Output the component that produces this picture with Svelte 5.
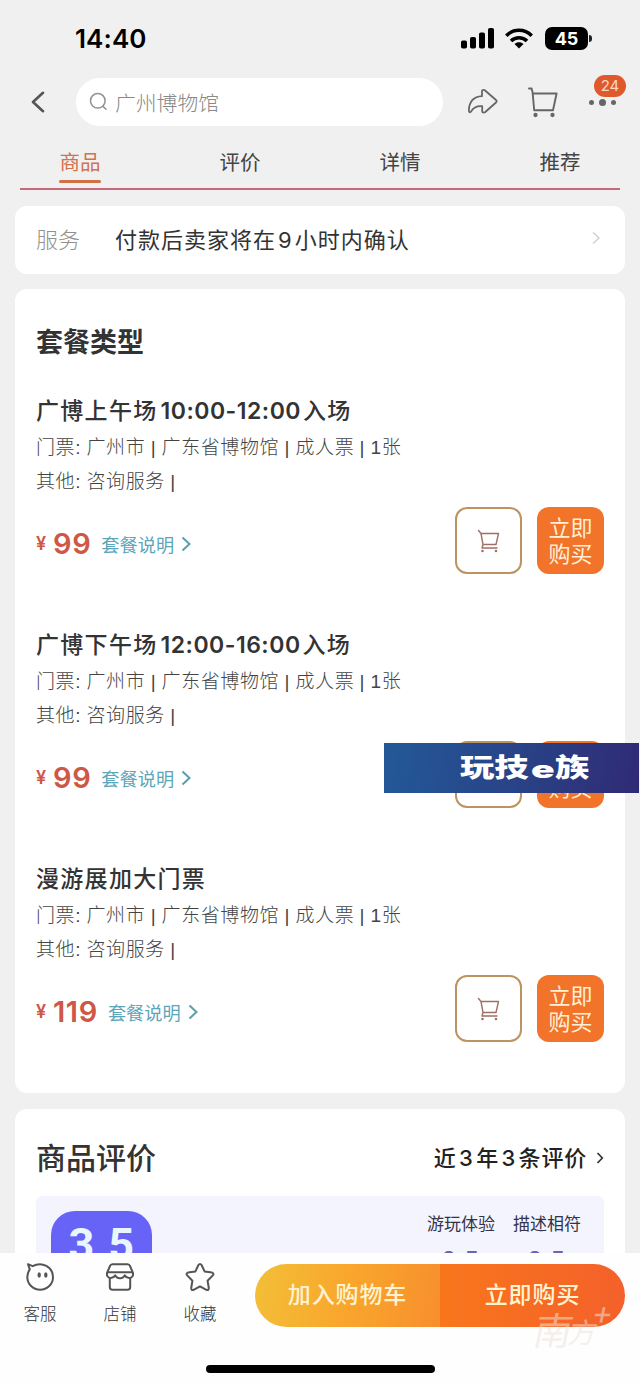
<script lang="ts">
	let tabs = ['商品', '评价', '详情', '推荐'];
	let active = $state('商品');

	let packages: { name: string[], price: number }[] = [
		{ name: ['广博上午场', '10:00-12:00', '入场'], price: 99 },
		{ name: ['广博下午场', '12:00-16:00', '入场'], price: 99 },
		{ name: ['漫游展加大门票'], price: 119 }
	];

	let scores = [
		{ label: '游玩体验', value: '3.5' },
		{ label: '描述相符', value: '3.5' }
	];
</script>

{#snippet cart(size: number, width: number)}
	<svg width={size} height={size} viewBox="0 0 32 32" fill="none" stroke="currentColor" stroke-width={width} stroke-linecap="round" stroke-linejoin="round">
		<path d="M2 2.5H4.6L5.6 6.5L7.2 24.2H26L29.6 7.5H5.8" />
		<circle cx="8.5" cy="29" r="1.2" fill="currentColor" />
		<circle cx="25.5" cy="29" r="1.2" fill="currentColor" />
	</svg>
{/snippet}

{#snippet smallCart()}
	<svg width="24" height="24" viewBox="0 0 24 24" fill="none" stroke="currentColor" stroke-width="1.4" stroke-linecap="round" stroke-linejoin="round">
		<path d="M1.5 1.5L4 4.500H21.5L19 15.5H6L4 4.5M6 15.5L5 19H20" />
		<circle cx="5.5" cy="22" r="0.6" fill="currentColor" />
		<circle cx="19" cy="22" r="0.6" fill="currentColor" />
	</svg>
{/snippet}

<div class="phone">
	<div class="screen">
		<div class="status">
			<span class="time">14:40</span>
			<svg class="signal" width="33" height="21" viewBox="0 0 33 21">
				<rect x="0" y="12.5" width="6" height="8" rx="1.8" />
				<rect x="9" y="9" width="6" height="11.5" rx="1.8" />
				<rect x="18" y="4.5" width="6" height="16" rx="1.8" />
				<rect x="27" y="0" width="6" height="20.5" rx="1.8" />
			</svg>
			<svg class="wifi" width="28" height="21" viewBox="0 0 28 21" fill="none" stroke="#000" stroke-width="3.6">
				<path d="M1.3 7.7C8.5 .5 19.5 .5 26.7 7.7" />
				<path d="M6 13C10.5 8.7 17.5 8.7 22 13" />
				<path d="M14 20.5L9.5 16C12 13.8 16 13.8 18.5 16Z" fill="#000" stroke="none" />
			</svg>
			<span class="battery">45</span>
			<span class="cap"></span>
		</div>

		<div class="top">
			<svg class="back" width="14" height="22" viewBox="0 0 14 22" fill="none" stroke="#555" stroke-width="2.6" stroke-linecap="round" stroke-linejoin="round">
				<path d="M12 1.8L2 11L12 20.2" />
			</svg>
			<div class="search">
				<svg width="20" height="20" viewBox="0 0 20 20" fill="none" stroke="#929292" stroke-width="1.5" stroke-linecap="round">
					<circle cx="8.8" cy="8.8" r="7.3" />
					<path d="M14 14.4L17 17.2" />
				</svg>
				<span>广州博物馆</span>
			</div>
			<svg class="share" width="32" height="28" viewBox="0 0 32 28" fill="none" stroke="#666" stroke-width="1.8" stroke-linejoin="round">
				<path d="M15.3 2.2Q16.5 1.4 17.8 2.3L29 12Q30.3 13.3 29 14.5L18 24.2Q15.6 25.4 15.2 23V18.2C9.5 17.7 6.5 19.3 4 23.6Q1.8 25.5 1.9 22C2.3 13.5 7 8.7 15 8.2V3.2Z" />
			</svg>
			<span class="cart">{@render cart(32, 1.9)}</span>
			<span class="more"><i></i><i></i><i></i><b>24</b></span>
		</div>

		<div class="tabs">
			{#each tabs as t}
				<button class:active={t === active} onclick={() => (active = t)}>{t}</button>
			{/each}
		</div>

		<div class="card service">
			<span class="label">服务</span>
			<span class="value">付款后卖家将在<em>9</em>小时内确认</span>
			<svg width="10" height="14" viewBox="0 0 10 14" fill="none" stroke="#d0d0d0" stroke-width="1.4">
				<path d="M2 1.5L8 7L2 12.5" />
			</svg>
		</div>

		<div class="card packages">
			<h2>套餐类型</h2>
			{#each packages as p}
				<div class="package">
					<h3>{#each p.name as part}<span class:hours={part.includes(':')}>{part}</span>{/each}</h3>
					<p>门票: 广州市 | 广东省博物馆 | 成人票 | 1张</p>
					<p>其他: 咨询服务 |</p>
					<div class="row">
						<span class="yen">¥</span>
						<span class="price">{p.price}</span>
						<span class="explain">套餐说明</span>
						<svg class="arrow" width="11" height="16" viewBox="0 0 11 16" fill="none" stroke="#5b9eae" stroke-width="2">
							<path d="M1.5 1.5L8.5 8L1.5 14.5" />
						</svg>
						<span class="add">{@render smallCart()}</span>
						<span class="buy">立即<br />购买</span>
					</div>
				</div>
			{/each}
		</div>

		<div class="card reviews">
			<div class="head">
				<h2>商品评价</h2>
				<span class="count">近<em>3</em>年<em>3</em>条评价</span>
				<svg width="8" height="12" viewBox="0 0 8 12" fill="none" stroke="#333" stroke-width="1.7">
					<path d="M1.5 1L6.3 6L1.5 11" />
				</svg>
			</div>
			<div class="panel">
				<span class="score">3.5</span>
				{#each scores as s}
					<div class="sub">
						<span>{s.label}</span>
						<b>{s.value}</b>
					</div>
				{/each}
			</div>
		</div>

		<div class="banner"><span>玩技</span><span class="small">e</span><span>族</span></div>
	</div>

	<div class="bottom">
		<div class="actions">
			<div class="action">
				<svg width="30" height="30" viewBox="0 0 30 30" fill="none" stroke="#555" stroke-width="2" stroke-linejoin="round">
					<path d="M3 2.2L7.6 4.2C17 -1 28 4.8 28 15.2C28 22 22.2 27.8 15.2 27.8C8 27.8 2.3 22 2.3 15C2.3 12 3.2 9.6 4.8 7.4Z" />
					<ellipse cx="14.2" cy="13" rx="1.7" ry="2.7" fill="#555" stroke="none" />
					<ellipse cx="20.8" cy="13" rx="1.7" ry="2.7" fill="#555" stroke="none" />
				</svg>
				<span>客服</span>
			</div>
			<div class="action">
				<svg width="30" height="30" viewBox="0 0 30 30" fill="none" stroke="#555" stroke-width="2" stroke-linejoin="round">
					<path d="M7.5 2.2H22.5Q24.5 2.2 25 4L28 11Q28.6 15.5 24.5 16Q21.5 16.2 19.7 13.4Q17.8 16.5 15 16.2Q12.2 16.5 10.3 13.4Q8.5 16.2 5.5 16Q1.4 15.5 2 11L5 4Q5.5 2.2 7.5 2.2Z" />
					<path d="M2.5 10.2H27.5M4.8 16V25Q4.8 27.8 7.5 27.8H22.5Q25.2 27.8 25.2 25V16" />
				</svg>
				<span>店铺</span>
			</div>
			<div class="action">
				<svg width="30" height="30" viewBox="0 0 30 30" fill="none" stroke="#555" stroke-width="2" stroke-linejoin="round">
					<path d="M13.4 3Q15 .8 16.6 3L19.7 9.6L27 10.6Q29.4 11.4 27.8 13.4L22.6 18.8L23.8 26Q23.8 28.8 21.4 27.8L15 24.4L8.6 27.8Q6.2 28.8 6.2 26L7.4 18.8L2.2 13.4Q.6 11.4 3 10.6L10.3 9.6Z" />
				</svg>
				<span>收藏</span>
			</div>
		</div>
		<div class="pay">
			<span class="to-cart">加入购物车</span>
			<span class="now">立即购买</span>
		</div>
		<div class="home"></div>
		<div class="mark"><span class="nan">南</span><span class="fang">方</span><span class="plus">+</span></div>
	</div>
</div>

<style>
	:global(body) {
		background: #f0f0f0;
	}

	.phone {
		width: 640px;
		height: 1385px;
		overflow: hidden;
		display: flex;
		flex-direction: column;
		font-family: Inter, "Noto Sans CJK SC", sans-serif;
		color: #333;
	}

	.phone span {
		white-space: nowrap;
	}

	svg {
		display: block;
		flex: none;
	}

	h2, h3, p {
		margin: 0;
		font-weight: 500;
	}

	em, i {
		font-style: normal;
	}

	.screen {
		position: relative;
		height: 1253px;
		flex: none;
		overflow: hidden;
		background: #f0f0f0;
	}

	.status {
		display: flex;
		align-items: center;
		height: 76px;
		box-sizing: border-box;
		padding: 0 48px 0 75px;
	}

	.time {
		flex: 1;
		color: #000;
		font-size: 26px;
		font-weight: 600;
		letter-spacing: 0.1px;
	}

	.wifi {
		margin: 0 12px 0 11px;
	}

	.battery {
		width: 43px;
		height: 23px;
		line-height: 23px;
		border-radius: 7px;
		background: #000;
		color: #fff;
		font-size: 18px;
		font-weight: 700;
		text-align: center;
	}

	.cap {
		width: 3px;
		height: 7px;
		margin-left: 1px;
		border-radius: 0 4px 4px 0;
		background: #222;
	}

	.top {
		display: flex;
		align-items: center;
		height: 52px;
		padding-left: 31px;
	}

	.search {
		display: flex;
		align-items: center;
		width: 367px;
		height: 48px;
		margin-left: 31px;
		box-sizing: border-box;
		padding-left: 13px;
		border-radius: 24px;
		background: #fff;
		color: #888;
		font-size: 20.8px;
		font-weight: 300;
	}

	.search span {
		margin-left: 6px;
		padding-bottom: 1px;
	}

	.share {
		margin-left: 24px;
	}

	.cart {
		margin-left: 28px;
		color: #666;
	}

	.more {
		position: relative;
		display: flex;
		align-items: center;
		gap: 5px;
		margin-left: 30px;
	}

	.more i {
		width: 5px;
		height: 5px;
		border-radius: 50%;
		background: #666;
	}

	.more i:nth-child(2) {
		width: 7px;
		height: 7px;
	}

	.more b {
		position: absolute;
		left: 5px;
		bottom: 9px;
		width: 32px;
		height: 22px;
		line-height: 22px;
		border-radius: 11px;
		background: #e0592d;
		color: #fbd9c2;
		font-size: 15px;
		font-weight: 400;
		text-align: center;
	}

	.tabs {
		display: flex;
		justify-content: space-between;
		height: 60px;
		border-bottom: 2px solid #c4687a;
		margin: 0 20px;
	}

	.tabs button {
		width: 120px;
		margin: 0;
		padding: 20px 0 0;
		border: 0;
		background: none;
		font: inherit;
		font-size: 20.5px;
		line-height: 30px;
		color: #444;
		display: flex;
		flex-direction: column;
		align-items: center;
	}

	.tabs button.active {
		color: #d0714f;
	}

	.tabs button.active::after {
		content: "";
		width: 42px;
		height: 3px;
		margin-top: 2px;
		border-radius: 2px;
		background: #cf7045;
	}

	.card {
		margin: 0 15px;
		background: #fff;
		border-radius: 12px;
		box-sizing: border-box;
	}

	.service {
		display: flex;
		align-items: center;
		height: 68px;
		margin-top: 16px;
		padding: 0 24px 4px 21px;
		font-size: 22px;
		margin-bottom: 15px;
	}

	.service .label {
		width: 79px;
		color: #909090;
		font-weight: 300;
	}

	.service .value {
		flex: 1;
		letter-spacing: 1px;
	}

	.service em {
		margin: 0 2px;
	}

	.packages {
		height: 804px;
		padding: 34px 21px 0;
	}

	.packages h2 {
		height: 71px;
		font-size: 27px;
		line-height: 40px;
		font-weight: 700;
	}

	.package {
		height: 234px;
	}

	.package h3 {
		height: 37px;
		line-height: 34px;
		font-size: 23px;
		letter-spacing: 1.3px;
	}

	.hours {
		margin: 0 2px 0 3px;
		font-weight: 600;
		letter-spacing: 0.5px;
	}

	.package p {
		height: 34px;
		line-height: 34px;
		font-family: "Liberation Sans", "Noto Sans CJK SC", sans-serif;
		font-size: 19px;
		font-weight: 300;
		letter-spacing: 0.6px;
		word-spacing: -0.5px;
		color: #444;
		white-space: nowrap;
	}

	.row {
		display: flex;
		align-items: center;
		height: 67px;
		margin-top: 8px;
	}

	.yen {
		width: 17px;
		padding-top: 6px;
		color: #cf5745;
		font-size: 18px;
		font-weight: 600;
	}

	.price {
		padding-top: 5px;
		color: #cf5745;
		font-size: 29px;
		font-weight: 600;
		letter-spacing: 0.6px;
	}

	.explain {
		margin-left: 10px;
		padding-top: 6px;
		color: #5ba6ba;
		font-size: 18.2px;
	}

	.arrow {
		margin: 7px auto 0 7px;
	}

	.add,
	.buy {
		display: flex;
		align-items: center;
		justify-content: center;
		box-sizing: border-box;
		width: 67px;
		height: 67px;
		border-radius: 12px;
	}

	.add {
		border: 2px solid #bd935f;
		color: #a06f66;
	}

	.buy {
		margin-left: 15px;
		background: #f2732a;
		color: #fff0d5;
		font-size: 22px;
		line-height: 26px;
	}

	.reviews {
		height: 300px;
		margin-top: 16px;
		padding: 25px 21px 0;
	}

	.head {
		display: flex;
		align-items: center;
		height: 44px;
		margin-bottom: 18px;
	}

	.head h2 {
		flex: 1;
		font-size: 30px;
	}

	.head svg {
		margin-top: 4px;
	}

	.count {
		margin-right: 9px;
		color: #222;
		font-size: 22px;
		font-weight: 500;
		letter-spacing: 0.8px;
	}

	.count em {
		margin: 0 2.5px;
	}

	.panel {
		display: flex;
		align-items: flex-start;
		height: 160px;
		padding: 15px 23px 0 15px;
		border-radius: 6px;
		background: #f4f4fe;
	}

	.score {
		width: 101px;
		height: 100px;
		margin-right: auto;
		border-radius: 24px;
		background: #6763f6;
		color: #eaf6ff;
		font: 700 45px/68px Roboto, sans-serif;
		letter-spacing: 0.5px;
		text-align: center;
	}

	.sub {
		display: flex;
		flex-direction: column;
		align-items: center;
		margin-left: 18px;
		color: #333345;
		font-size: 17px;
		line-height: 26px;
	}

	.sub b {
		margin-top: 9px;
		color: #6a62b4;
		font-size: 21px;
		line-height: 28px;
		letter-spacing: 1.5px;
	}

	.banner {
		position: absolute;
		left: 384px;
		top: 743px;
		width: 255px;
		height: 50px;
		box-sizing: border-box;
		padding-left: 76px;
		background: linear-gradient(100deg, #235998, #284488 50%, #302a75);
		color: #fff;
		font-size: 26px;
		font-weight: 900;
		line-height: 50px;
		display: flex;
	}

	.banner span {
		transform: scaleX(1.32);
		transform-origin: left;
	}

	.banner span:first-child {
		width: 71px;
	}

	.banner .small {
		width: 24px;
		transform: scale(1.5, 0.9);
		transform-origin: left 46px;
	}

	.bottom {
		position: relative;
		flex: none;
		height: 132px;
		background: #fefefe;
		display: grid;
		grid-template-columns: 240px 370px;
		grid-template-rows: 113px 8px;
		column-gap: 15px;
	}

	.actions {
		display: grid;
		grid-template-columns: 80px 80px 80px;
		padding-top: 9px;
	}

	.action {
		display: flex;
		flex-direction: column;
		align-items: center;
		font-size: 16.5px;
		font-weight: 300;
		line-height: 24px;
		color: #333;
	}

	.action span {
		margin-top: 10px;
	}

	.pay {
		display: grid;
		grid-template-columns: 185px 185px;
		height: 63px;
		margin-top: 11px;
		border-radius: 32px;
		overflow: hidden;
		font-size: 23px;
		font-weight: 500;
		line-height: 63px;
		text-align: center;
		color: #fff3d0;
		letter-spacing: 0.9px;
	}

	.to-cart {
		background: linear-gradient(100deg, #f3bf38, #f9a62c 50%, #f78f2c);
	}

	.now {
		background: linear-gradient(90deg, #f9761c, #f4602a);
	}

	.home {
		grid-column: 1 / 3;
		width: 229px;
		height: 8px;
		margin-top: -1px;
		margin-left: 206px;
		border-radius: 4px;
		background: #000;
	}

	.mark {
		position: absolute;
		left: 534px;
		top: 47px;
		display: flex;
		color: rgba(238, 226, 220, 0.55);
		font-weight: 400;
		transform: skewX(-12deg);
	}

	.nan {
		font-size: 38px;
		line-height: 62px;
	}

	.fang {
		margin-left: -3px;
		font-size: 28px;
		line-height: 66px;
	}

	.plus {
		font-size: 32px;
		line-height: 26px;
		margin-left: -9px;
	}
</style>
